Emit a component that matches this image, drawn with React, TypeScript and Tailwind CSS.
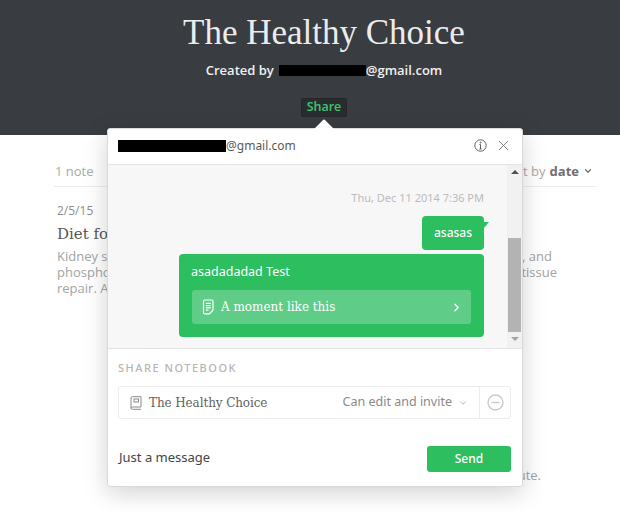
import { X, ChevronRight, ChevronDown } from "lucide-react";

const sans = "font-['Open_Sans',sans-serif]";
const serif = "font-['DejaVu_Serif',serif]";

function NoteIcon() {
  return (
    <svg width="12" height="16" viewBox="0 0 12 16" fill="none" stroke="white" strokeWidth="1.2">
      <path d="M1.5 2.2Q1.5 1 2.7 1H9.8Q11 1 11 2.2V11L7.5 14.8H2.7Q1.5 14.8 1.5 13.6Z" />
      <path d="M3.8 4.3H8.8M3.8 6.6H8.8M3.8 8.9H8.8M3.8 11.2H6.5" />
    </svg>
  );
}

function BookIcon() {
  return (
    <svg width="12" height="14" viewBox="0 0 12 14" fill="none" stroke="#8a8a8a" strokeWidth="1">
      <path d="M1 2Q1 .7 2.300 .7H11V11H2.500Q1 11 1 12.200Q1 13.300 2.500 13.300H11" />
      <path d="M1 2V12.200" />
      <rect x="4" y="3" width="4.500" height="3" />
    </svg>
  );
}

function Background() {
  return (
    <div className={`${sans} h-[377px] bg-white pl-[54px] pr-[24px]`}>
      <div className="flex h-[52px] items-end justify-between border-b border-[#ececec] pb-[5px] pl-[1px] pr-[3px] text-[13px] text-[#a9a9a9]">
        <span>1 note</span>
        <span className="flex items-center gap-1">
          Sort by <b className="text-[#6f6f6f]">date</b>
          <ChevronDown size={10} strokeWidth={3} className="text-[#6f6f6f]" />
        </span>
      </div>
      <div className="pl-[3px]">
        <div className="mt-[15px] text-[12px] text-[#8c8c8c]">2/5/15</div>
        <div className={`${serif} mt-[3px] text-[15px] text-[#555]`}>Diet for kidney stones</div>
        <div className="mt-[2px] text-[13px] leading-[16px] text-[#a3a3a3]">
          <div className="flex justify-between pr-[44px]">
            <span>Kidney stones</span>
            <span>, and</span>
          </div>
          <div className="flex justify-between pr-[39px]">
            <span>phosphorus</span>
            <span>tissue</span>
          </div>
          <div>repair. Avoid</div>
        </div>
      </div>
      <div className="mt-[170px] pr-[55px] text-right text-[13px] text-[#a3a3a3]">ute.</div>
    </div>
  );
}

function Popover() {
  return (
    <div className="absolute left-[107px] top-[128px] w-[416px] rounded-[3px] border border-[#d9d9d9] bg-white shadow-[0_6px_24px_rgba(0,0,0,0.18)]">
      <div className="absolute left-[209px] top-[-7px] h-[14px] w-[14px] rotate-45 rounded-[1px] bg-white" />
      <div className="relative flex h-[36px] items-center justify-between border-b border-[#e4e4e4] pb-[2px] pl-[10px] pr-[10px]">
        <div className="flex items-center text-[12px] text-[#5a5a5a]">
          <span className="h-[12px] w-[108px] bg-black" />
          @gmail.com
        </div>
        <div className="flex items-center gap-[8px] text-[#5f5f5f]">
          <svg width="13" height="13" viewBox="0 0 13 13" fill="none" stroke="currentColor">
            <circle cx="6.500" cy="6.500" r="5.700" />
            <path d="M6.500 5.500V10M5.300 10H7.700M5.400 5.500H6.500" />
            <circle cx="6.500" cy="3.500" r=".5" fill="currentColor" />
          </svg>
          <X size={17} strokeWidth={1.1} />
        </div>
      </div>
      <div className="flex h-[184px] border-b border-[#e4e4e4] bg-[#f7f7f7]">
        <div className="flex flex-1 flex-col items-end pr-[23px] pt-[26px]">
          <div className="text-[11px] leading-[14px] text-[#bbbbbb]">Thu, Dec 11 2014 7:36 PM</div>
          <div className="relative mt-[11px] flex h-[34px] w-[62px] items-center justify-center rounded-[4px] bg-[#2dbe60] text-[12px] font-medium text-white">
            asasas
            <span className="absolute right-[-5px] top-[6px] h-0 w-0 border-r-[5px] border-t-[6px] border-r-transparent border-t-[#2dbe60]" />
          </div>
          <div className="mt-[4px] h-[83px] w-[305px] rounded-[4px] bg-[#2dbe60] px-[12px] pt-[10px] text-white">
            <div className="text-[12.500px] leading-[16px]">asadadadad Test</div>
            <div className="mx-[1px] mt-[10px] flex h-[34px] items-center rounded-[3px] bg-[#5fcc87] pl-[10px] pr-[8px]">
              <NoteIcon />
              <span className={`${serif} ml-[7px] flex-1 text-[12px]`}>A moment like this</span>
              <ChevronRight size={13} strokeWidth={2.500} />
            </div>
          </div>
        </div>
        <div className="flex w-[15px] flex-col items-center bg-[#f1f1f1]">
          <span className="mt-[5px] h-0 w-0 border-x-[4px] border-b-[4px] border-x-transparent border-b-[#505050]" />
          <div className="mt-[64px] h-[94px] w-[13px] bg-[#b3b3b3]" />
          <span className="mt-[5px] h-0 w-0 border-x-[4px] border-t-[4px] border-x-transparent border-t-[#a3a3a3]" />
        </div>
      </div>
      <div className="h-[137px] px-[10px]">
        <div className="pt-[12px] text-[11px] font-medium leading-[14px] tracking-[1.500px] text-[#b5b5b5]">SHARE NOTEBOOK</div>
        <div className="mt-[11px] flex h-[33px] w-[393px] items-center rounded-[3px] border border-[#ececec]">
          <div className="flex flex-1 items-center pl-[11px] pr-[11px]">
            <BookIcon />
            <span className={`${serif} ml-[7px] flex-1 text-[12px] tracking-[-0.1px] text-[#5f5f5f]`}>The Healthy Choice</span>
            <span className="text-[12.500px] text-[#8a8a8a]">Can edit and invite</span>
            <ChevronDown size={10} strokeWidth={1.500} className="ml-[6px] text-[#8a8a8a]" />
          </div>
          <div className="flex h-full w-[31px] items-center justify-center border-l border-[#ececec]">
            <svg width="17" height="17" viewBox="0 0 17 17" fill="none" stroke="#c9c9c9" strokeWidth="1.300">
              <circle cx="8.500" cy="8.500" r="7.500" />
              <path d="M4.500 8.500H12.500" />
            </svg>
          </div>
        </div>
        <div className="mt-[27px] flex w-[393px] items-center justify-between">
          <span className="pb-[2px] pl-[1px] text-[13px] text-[#444]">Just a message</span>
          <div className="flex h-[26px] w-[84px] items-center justify-center rounded-[3px] bg-[#2dbe60] text-[12px] font-medium text-white">
            Send
          </div>
        </div>
      </div>
    </div>
  );
}

export default function App() {
  return (
    <div className="relative h-[512px] w-[620px] overflow-hidden bg-white">
      <div className={`${sans} flex h-[135px] flex-col items-center bg-[#393c41] pl-[28px]`}>
        <h1 className="mt-[14px] font-['Liberation_Serif',serif] text-[35px] leading-[38px] text-[#ececec]">The Healthy Choice</h1>
        <div className="mt-[10px] flex items-center text-[13px] font-semibold leading-[16px] text-[#f0f0f0]">
          Created by
          <span className="ml-[5px] h-[11px] w-[87px] bg-black" />
          @gmail.com
        </div>
        <div className="mt-[20px] flex h-[19px] w-[46px] items-center justify-center rounded-[2px] border border-[#25272a] bg-[#2a2d30] text-[12.500px] font-semibold text-[#3ec56b]">
          Share
        </div>
      </div>
      <Background />
      <Popover />
    </div>
  );
}
